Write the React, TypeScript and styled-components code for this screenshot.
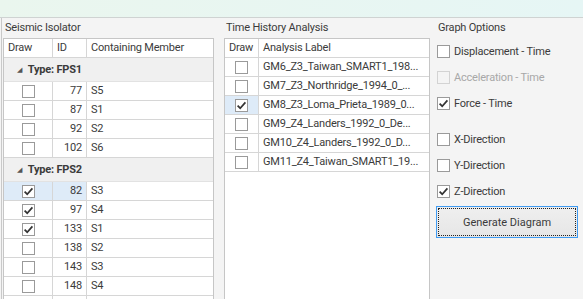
import styled, { createGlobalStyle } from 'styled-components';

const GlobalStyle = createGlobalStyle`
  html, body {
    margin: 0;
    padding: 0;
  }
  body {
    font-family: Roboto, "Noto Sans", sans-serif;
    font-size: 11px;
    letter-spacing: -0.2px;
    color: #3b3b3b;
  }
`;

type Isolator = { id?: number; member?: string; checked?: boolean; active?: boolean };

const groups: { name: string; rows: Isolator[] }[] = [
  {
    name: 'Type: FPS1',
    rows: [
      { id: 77, member: 'S5' },
      { id: 87, member: 'S1' },
      { id: 92, member: 'S2' },
      { id: 102, member: 'S6' },
    ],
  },
  {
    name: 'Type: FPS2',
    rows: [
      { id: 82, member: 'S3', checked: true, active: true },
      { id: 97, member: 'S4', checked: true },
      { id: 133, member: 'S1', checked: true },
      { id: 138, member: 'S2' },
      { id: 143, member: 'S3' },
      { id: 148, member: 'S4' },
      {},
    ],
  },
];

const analyses = [
  { label: 'GM6_Z3_Taiwan_SMART1_198...' },
  { label: 'GM7_Z3_Northridge_1994_0_...' },
  { label: 'GM8_Z3_Loma_Prieta_1989_0...', checked: true, active: true },
  { label: 'GM9_Z4_Landers_1992_0_De...' },
  { label: 'GM10_Z4_Landers_1992_0_D...' },
  { label: 'GM11_Z4_Taiwan_SMART1_19...' },
];

const options = [
  { label: 'Displacement - Time' },
  { label: 'Acceleration - Time', disabled: true },
  { label: 'Force - Time', checked: true },
  { label: 'X-Direction', gap: true },
  { label: 'Y-Direction' },
  { label: 'Z-Direction', checked: true },
];

const Check = ({ checked, disabled }: { checked?: boolean; disabled?: boolean }) => (
  <Box $disabled={disabled}>
    {checked && (
      <svg width="11" height="11" viewBox="0 0 11 11">
        <path d="M1.6 5.6 L4.2 8.2 L9.4 2.4" fill="none" stroke="#333" strokeWidth="1.7" />
      </svg>
    )}
  </Box>
);

const App = () => {
  return (
    <Page>
      <GlobalStyle />
      <TopStrip />
      <Body>
        <LeftSection>
          <Caption>Seismic Isolator</Caption>
          <Grid>
            <Row $cols="49px 34px 1fr">
              <HeadCell>Draw</HeadCell>
              <HeadCell>ID</HeadCell>
              <HeadCell>Containing Member</HeadCell>
            </Row>
            {groups.map((g) => (
              <div key={g.name}>
                <GroupRow>
                  <Arrow>◢</Arrow>
                  {g.name}
                </GroupRow>
                {g.rows.map((r, i) => (
                  <Row key={i} $cols="49px 34px 1fr">
                    <Cell $center $active={r.active}>
                      {r.id !== undefined && <Check checked={r.checked} />}
                    </Cell>
                    <Cell $right $active={r.active}>{r.id}</Cell>
                    <Cell>{r.member}</Cell>
                  </Row>
                ))}
              </div>
            ))}
          </Grid>
        </LeftSection>

        <MiddleSection>
          <Caption>Time History Analysis</Caption>
          <Grid>
            <Row $cols="34px 1fr">
              <HeadCell>Draw</HeadCell>
              <HeadCell>Analysis Label</HeadCell>
            </Row>
            {analyses.map((a) => (
              <Row key={a.label} $cols="34px 1fr">
                <Cell $center $active={a.active}>
                  <Check checked={a.checked} />
                </Cell>
                <Cell>{a.label}</Cell>
              </Row>
            ))}
          </Grid>
        </MiddleSection>

        <RightSection>
          <Caption>Graph Options</Caption>
          {options.map((o) => (
            <Option key={o.label} $gap={o.gap} $disabled={o.disabled}>
              <Check checked={o.checked} disabled={o.disabled} />
              {o.label}
            </Option>
          ))}
          <Button>
            <FocusRect>Generate Diagram</FocusRect>
          </Button>
        </RightSection>
      </Body>
    </Page>
  );
};

export default App;

const Page = styled.div`
  width: 583px;
  height: 299px;
  background: #f4f4f4;
  overflow: hidden;
  display: flex;
  flex-direction: column;
`;

const TopStrip = styled.div`
  height: 17px;
  flex: none;
  background: linear-gradient(to right, #eaf6ee, #e6f6f5);
  border-bottom: 1px solid #cfd3d2;
`;

const Body = styled.div`
  flex: 1;
  display: flex;
  padding-left: 1px;
  min-height: 0;
`;

const LeftSection = styled.section`
  width: 211px;
  border-left: 1px solid #c9c9c9;
  padding-left: 1px;
  display: flex;
  flex-direction: column;
`;

const MiddleSection = styled.section`
  width: 206px;
  margin-left: 10px;
  display: flex;
  flex-direction: column;
`;

const RightSection = styled.section`
  width: 142px;
  margin-left: 6px;
  display: flex;
  flex-direction: column;
`;

const Caption = styled.div`
  height: 20px;
  line-height: 20px;
  padding-left: 2px;
  flex: none;
  white-space: nowrap;
`;

const Grid = styled.div`
  flex: 1;
  background: #fff;
  border: 1px solid #c6c6c6;
  border-bottom: none;
  overflow: hidden;
`;

const Row = styled.div<{ $cols: string }>`
  display: grid;
  grid-template-columns: ${(p) => p.$cols};
  height: 19px;
  box-sizing: border-box;
  border-bottom: 1px solid #d6d6d6;
`;

const HeadCell = styled.div`
  box-sizing: border-box;
  border-right: 1px solid #d6d6d6;
  padding: 0 4px;
  line-height: 18px;
  white-space: nowrap;
  overflow: hidden;
  &:last-child {
    border-right: none;
  }
`;

const Cell = styled.div<{ $center?: boolean; $right?: boolean; $active?: boolean }>`
  box-sizing: border-box;
  border-right: 1px solid #d6d6d6;
  padding: 0 4px;
  line-height: 18px;
  white-space: nowrap;
  overflow: hidden;
  background: ${(p) => (p.$active ? '#deebf8' : 'transparent')};
  text-align: ${(p) => (p.$right ? 'right' : 'left')};
  display: ${(p) => (p.$center ? 'flex' : 'block')};
  align-items: center;
  justify-content: center;
  &:last-child {
    border-right: none;
  }
`;

const GroupRow = styled.div`
  height: 24px;
  box-sizing: border-box;
  border-bottom: 1px solid #e2e2e2;
  background: #f0f0f0;
  display: flex;
  align-items: center;
  font-weight: bold;
  padding-left: 13px;
`;

const Arrow = styled.span`
  font-size: 7px;
  color: #555;
  margin-right: 6px;
  font-weight: normal;
`;

const Box = styled.span<{ $disabled?: boolean }>`
  width: 13px;
  height: 13px;
  box-sizing: border-box;
  border: 1px solid ${(p) => (p.$disabled ? '#d3d3d3' : '#9a9a9a')};
  background: ${(p) => (p.$disabled ? '#f4f4f4' : '#fff')};
  display: inline-flex;
  align-items: center;
  justify-content: center;
  flex: none;
`;

const Option = styled.label<{ $gap?: boolean; $disabled?: boolean }>`
  height: 26px;
  display: flex;
  align-items: center;
  gap: 4px;
  padding-left: 1px;
  margin-top: ${(p) => (p.$gap ? '10px' : '0')};
  color: ${(p) => (p.$disabled ? '#a8a8a8' : '#3b3b3b')};
  white-space: nowrap;
`;

const Button = styled.button`
  margin-top: 2px;
  height: 32px;
  width: 142px;
  padding: 1px;
  border: 1px solid #3f9bf2;
  background: linear-gradient(#efefef, #e6e6e6);
  font: inherit;
  color: #3b3b3b;
  display: flex;
`;

const FocusRect = styled.span`
  flex: 1;
  border: 1px dotted #222;
  display: flex;
  align-items: center;
  justify-content: center;
`;
